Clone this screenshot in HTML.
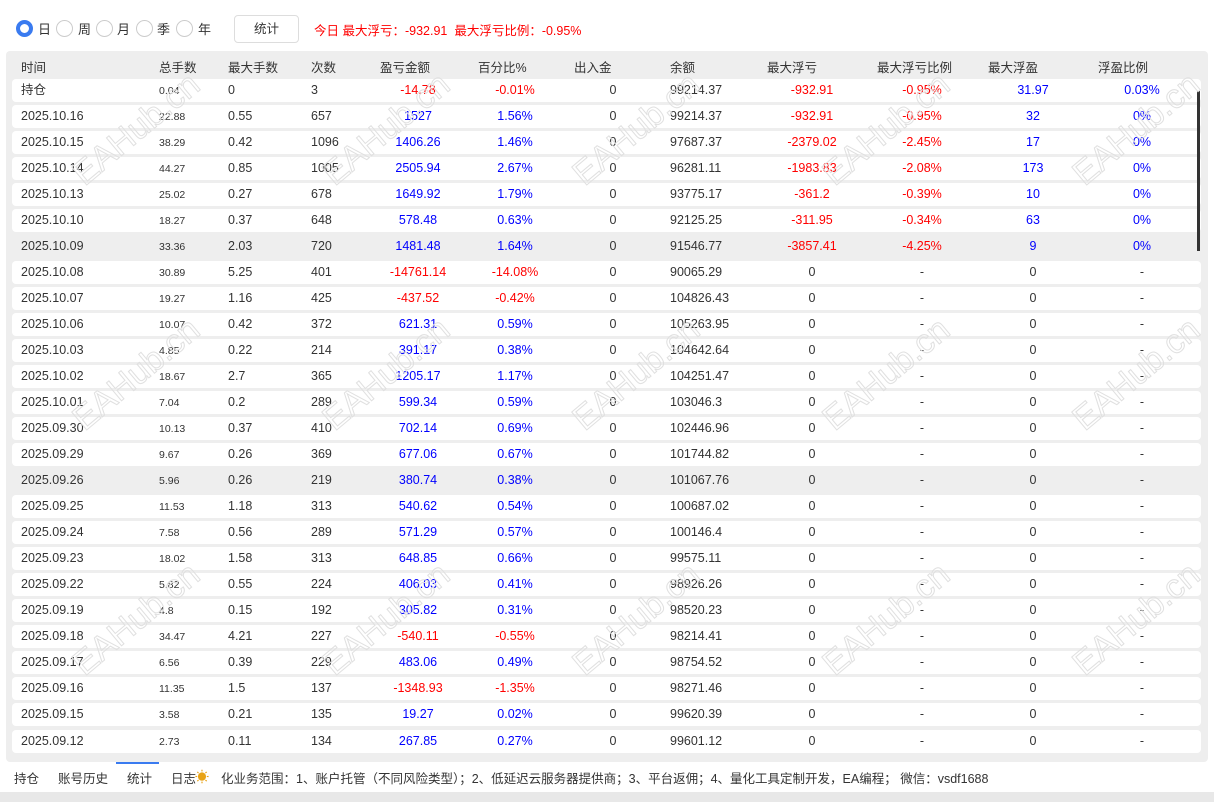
<!DOCTYPE html>
<html><head><meta charset="utf-8"><style>
*{margin:0;padding:0;box-sizing:border-box}
body{width:1214px;height:802px;background:#fff;font-family:"Liberation Sans","Noto Sans CJK SC",sans-serif;font-size:12.5px;color:#333;position:relative;overflow:hidden}
.a{position:absolute;white-space:nowrap}
.radio{position:absolute;top:20px;width:17px;height:17px;border-radius:50%;border:1px solid #ccc;background:#fff}
.radio.on{border:4px solid #3a7bf0}
.lb{position:absolute;top:19px;font-size:13px}
.box{position:absolute;left:6px;top:51px;width:1202px;height:711px;background:#eee;border-radius:4px;overflow:hidden}
.row{position:absolute;left:6px;width:1189px;height:23px;background:#fff;border-radius:4px}
.row.g{background:#eee}
.c{position:absolute;top:4px;white-space:nowrap;line-height:15px}
.r{color:#f00}.b{color:#00f}
.s{font-size:10.5px;top:5px}
.wm{position:absolute;font-size:34px;color:transparent;-webkit-text-stroke:1px #e0e0e0;transform:rotate(-40deg);font-family:"Liberation Sans",sans-serif;white-space:nowrap}
</style></head><body>
<div class="radio on" style="left:16px"></div><span class="lb" style="left:38px">日</span>
<div class="radio" style="left:56px"></div><span class="lb" style="left:78px">周</span>
<div class="radio" style="left:96px"></div><span class="lb" style="left:117px">月</span>
<div class="radio" style="left:136px"></div><span class="lb" style="left:157px">季</span>
<div class="radio" style="left:176px"></div><span class="lb" style="left:198px">年</span>
<div class="a" style="left:234px;top:15px;width:65px;height:28px;border:1px solid #ddd;border-radius:4px;text-align:center;line-height:26px">统计</div>
<span class="a r" style="left:314px;top:20px">今日 最大浮亏：-932.91&nbsp; 最大浮亏比例：-0.95%</span>
<div class="box">
<div id="h"></div>
<div id="rows"></div>
<div style="position:absolute;left:1191px;top:40px;width:3px;height:160px;background:#333"></div>
</div>
<div id="wms"></div>
<div class="a" style="left:116px;top:762px;width:43px;height:2px;background:#3a7bf0"></div>
<span class="a" style="left:14px;top:768px">持仓</span>
<span class="a" style="left:58px;top:768px">账号历史</span>
<span class="a" style="left:127px;top:768px">统计</span>
<span class="a" style="left:171px;top:768px">日志</span>
<span class="a" style="left:195px;top:767px;color:#e8a317;font-size:14px">☀</span>
<span class="a" style="left:221px;top:768px">化业务范围：1、账户托管（不同风险类型）；2、低延迟云服务器提供商；3、平台返佣；4、量化工具定制开发，EA编程； 微信：vsdf1688</span>
<div class="a" style="left:0;top:792px;width:1214px;height:10px;background:#e8e8e8"></div>
<script>
(function(){
var H=["时间",21,"总手数",159,"最大手数",228,"次数",311,"盈亏金额",380,"百分比%",478,"出入金",574,"余额",670,"最大浮亏",767,"最大浮亏比例",877,"最大浮盈",988,"浮盈比例",1098];
var h="";for(var i=0;i<H.length;i+=2)h+='<span class="c" style="left:'+(H[i+1]-6)+'px;top:10px">'+H[i]+'</span>';
document.getElementById("h").innerHTML=h;
var D=[
["持仓","0.04","0","3","-14.78","-0.01%","0","99214.37","-932.91","-0.95%","31.97","0.03%"],
["2025.10.16","22.88","0.55","657","1527","1.56%","0","99214.37","-932.91","-0.95%","32","0%"],
["2025.10.15","38.29","0.42","1096","1406.26","1.46%","0","97687.37","-2379.02","-2.45%","17","0%"],
["2025.10.14","44.27","0.85","1005","2505.94","2.67%","0","96281.11","-1983.83","-2.08%","173","0%"],
["2025.10.13","25.02","0.27","678","1649.92","1.79%","0","93775.17","-361.2","-0.39%","10","0%"],
["2025.10.10","18.27","0.37","648","578.48","0.63%","0","92125.25","-311.95","-0.34%","63","0%"],
["2025.10.09","33.36","2.03","720","1481.48","1.64%","0","91546.77","-3857.41","-4.25%","9","0%"],
["2025.10.08","30.89","5.25","401","-14761.14","-14.08%","0","90065.29","0","-","0","-"],
["2025.10.07","19.27","1.16","425","-437.52","-0.42%","0","104826.43","0","-","0","-"],
["2025.10.06","10.07","0.42","372","621.31","0.59%","0","105263.95","0","-","0","-"],
["2025.10.03","4.85","0.22","214","391.17","0.38%","0","104642.64","0","-","0","-"],
["2025.10.02","18.67","2.7","365","1205.17","1.17%","0","104251.47","0","-","0","-"],
["2025.10.01","7.04","0.2","289","599.34","0.59%","0","103046.3","0","-","0","-"],
["2025.09.30","10.13","0.37","410","702.14","0.69%","0","102446.96","0","-","0","-"],
["2025.09.29","9.67","0.26","369","677.06","0.67%","0","101744.82","0","-","0","-"],
["2025.09.26","5.96","0.26","219","380.74","0.38%","0","101067.76","0","-","0","-"],
["2025.09.25","11.53","1.18","313","540.62","0.54%","0","100687.02","0","-","0","-"],
["2025.09.24","7.58","0.56","289","571.29","0.57%","0","100146.4","0","-","0","-"],
["2025.09.23","18.02","1.58","313","648.85","0.66%","0","99575.11","0","-","0","-"],
["2025.09.22","5.82","0.55","224","406.03","0.41%","0","98926.26","0","-","0","-"],
["2025.09.19","4.8","0.15","192","305.82","0.31%","0","98520.23","0","-","0","-"],
["2025.09.18","34.47","4.21","227","-540.11","-0.55%","0","98214.41","0","-","0","-"],
["2025.09.17","6.56","0.39","229","483.06","0.49%","0","98754.52","0","-","0","-"],
["2025.09.16","11.35","1.5","137","-1348.93","-1.35%","0","98271.46","0","-","0","-"],
["2025.09.15","3.58","0.21","135","19.27","0.02%","0","99620.39","0","-","0","-"],
["2025.09.12","2.73","0.11","134","267.85","0.27%","0","99601.12","0","-","0","-"]];
var out="";
function cen(x,t,cls){return '<span class="c '+cls+'" style="left:'+(x-12-60)+'px;width:120px;text-align:center">'+t+'</span>';}
function lf(x,t,cls){return '<span class="c '+(cls||"")+'" style="left:'+(x-12)+'px">'+t+'</span>';}
function col(v){return v.charAt(0)=="-"&&v!="-"?"r":"b";}
for(var i=0;i<D.length;i++){var d=D[i];var ty=Math.round(27.5+26.04*i);
var g=(i==6||i==15)?" g":"";
var s='<div class="row'+g+'" style="top:'+ty+'px">';
s+=lf(21,d[0])+lf(159,d[1],"s")+lf(228,d[2])+lf(311,d[3]);
s+=cen(418,d[4],col(d[4]))+cen(515,d[5],col(d[5]))+cen(613,d[6],"")+lf(670,d[7]);
s+=cen(812,d[8],d[8]=="0"?"":"r")+cen(922,d[9],d[9]=="-"?"":"r")+cen(1033,d[10],d[10]=="0"?"":"b")+cen(1142,d[11],d[11]=="-"?"":"b");
s+='</div>';out+=s;}
document.getElementById("rows").innerHTML=out;
var w="";var xs=[80,330,580,830,1080],ys=[130,375,620];
for(var a=0;a<3;a++)for(var b=0;b<5;b++)w+='<span class="wm" style="left:'+(xs[b]-20)+'px;top:'+(ys[a]-20)+'px">EAHub.cn</span>';
document.getElementById("wms").innerHTML=w;
})();
</script>
</body></html>
